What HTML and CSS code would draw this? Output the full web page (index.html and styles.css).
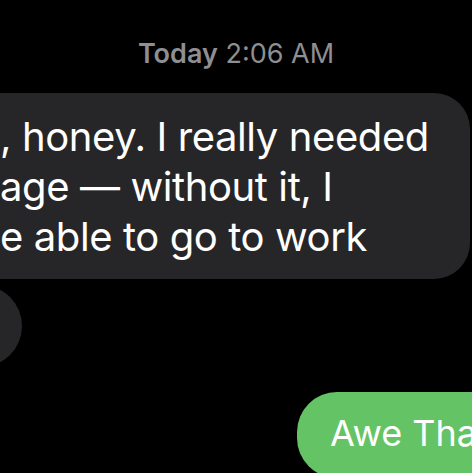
FILE: index.html
```html
<!DOCTYPE html>
<html lang="en">
<head>
<meta charset="utf-8">
<title>Messages</title>
<link rel="stylesheet" href="styles.css">
</head>
<body>
<main class="thread">
  <div class="stamp"><span class="day">Today</span> 2:06 AM</div>
  <div class="bubble in first">, honey. I really needed<br>age — without it, I<br>e able to go to work</div>
  <div class="bubble in small"></div>
  <div class="bubble out">Awe Tha</div>
</main>
</body>
</html>
```
FILE: styles.css
```css
html, body {
  margin: 0;
  padding: 0;
  background: #000;
}
body {
  width: 472px;
  height: 473px;
  overflow: hidden;
  font-family: Inter, "Noto Sans", "Liberation Sans", sans-serif;
}
.thread {
  display: flex;
  flex-direction: column;
  padding-top: 38px;
}
.stamp {
  text-align: center;
  color: #8e8e93;
  font-size: 27px;
  line-height: 32px;
}
.day {
  font-weight: 600;
}
.bubble {
  color: #fff;
  line-height: 50px;
}
.in {
  background: #262628;
  align-self: flex-start;
}
.first {
  margin-top: 23px;
  width: 430px;
  padding: 19px 40px 17px 0;
  border-radius: 0 36px 36px 0;
  font-size: 40px;
  letter-spacing: -0.4px;
}
.small {
  margin-top: 6px;
  margin-left: -78px;
  width: 100px;
  height: 82px;
  border-radius: 41px;
}
.out {
  align-self: flex-start;
  margin-top: 25px;
  margin-left: 297px;
  width: 260px;
  padding: 16px 33px 20px;
  background: #64c465;
  border-radius: 40px;
  white-space: nowrap;
  font-size: 36px;
}
```
